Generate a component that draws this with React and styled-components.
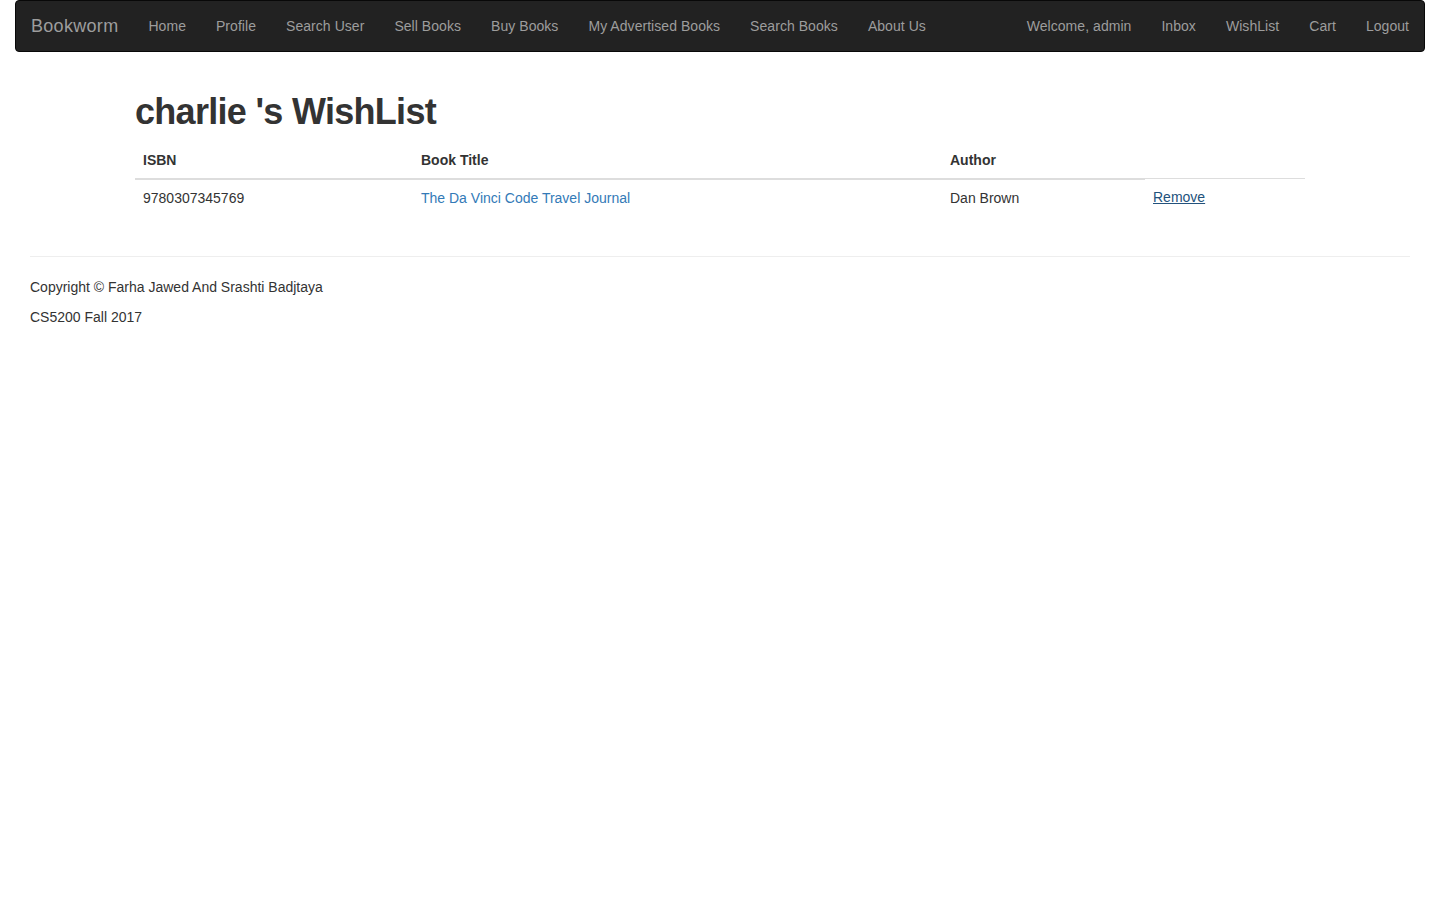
import React from "react";
import styled, { createGlobalStyle } from "styled-components";

const Global = createGlobalStyle`
  html, body { margin: 0; padding: 0; background: #fff; }
  body {
    font-family: "Liberation Sans", Arial, sans-serif;
    font-size: 14px;
    line-height: 20px;
    color: #333;
  }
  * { box-sizing: border-box; }
`;

const Page = styled.div`
  padding: 0 15px;
  display: flow-root;
`;

const Navbar = styled.nav`
  display: flex;
  align-items: center;
  height: 52px;
  background: #222;
  border: 1px solid #080808;
  border-radius: 4px;
  margin-bottom: 20px;
`;

const Brand = styled.a`
  padding: 15px;
  font-size: 18px;
  line-height: 20px;
  color: #9d9d9d;
  text-decoration: none;
  letter-spacing: 0.3px;
`;

const NavList = styled.ul`
  display: flex;
  list-style: none;
  margin: 0;
  padding: 0;
  margin-left: ${(p) => (p.$right ? "auto" : "0")};
`;

const NavLink = styled.a`
  display: block;
  padding: 15px;
  font-size: 14px;
  line-height: 20px;
  color: #9d9d9d;
  text-decoration: none;
  letter-spacing: 0.05px;
`;

const Container = styled.div`
  width: 1170px;
  margin: 0 auto;
  display: flow-root;
`;

const Title = styled.h1`
  font-size: 36px;
  line-height: 39.6px;
  font-weight: 700;
  margin: 20px 0 10px;
  color: #333;
  letter-spacing: -0.7px;
`;

const Table = styled.table`
  width: 100%;
  border-collapse: collapse;
  border-spacing: 0;
  margin-bottom: 20px;
`;

const Th = styled.th`
  text-align: left;
  padding: 8px;
  line-height: 20px;
  font-weight: 700;
  border-bottom: 2px solid #ddd;
  width: ${(p) => p.$w}px;
`;

const Td = styled.td`
  padding: 8px;
  line-height: 20px;
  border-top: 1px solid #ddd;
  vertical-align: top;
  width: ${(p) => p.$w}px;
`;

const TitleLink = styled.a`
  color: #337ab7;
  text-decoration: none;
`;

const RemoveLink = styled.a`
  color: #23527c;
  text-decoration: underline;
`;

const Footer = styled.footer`
  padding: 0 15px;
  display: flow-root;
`;

const Rule = styled.hr`
  margin: 20px 0;
  border: 0;
  border-top: 1px solid #eee;
`;

const FootText = styled.p`
  margin: 0 0 10px;
`;

const leftLinks = [
  "Home",
  "Profile",
  "Search User",
  "Sell Books",
  "Buy Books",
  "My Advertised Books",
  "Search Books",
  "About Us",
];
const rightLinks = ["Welcome, admin", "Inbox", "WishList", "Cart", "Logout"];

export default function App() {
  return (
    <>
      <Global />
      <Page>
        <Navbar>
          <Brand href="#">Bookworm</Brand>
          <NavList>
            {leftLinks.map((l) => (
              <li key={l}>
                <NavLink href="#">{l}</NavLink>
              </li>
            ))}
          </NavList>
          <NavList $right>
            {rightLinks.map((l) => (
              <li key={l}>
                <NavLink href="#">{l}</NavLink>
              </li>
            ))}
          </NavList>
        </Navbar>
        <Container>
          <Title>charlie 's WishList</Title>
          <Table>
            <thead>
              <tr>
                <Th $w={278}>ISBN</Th>
                <Th $w={529}>Book Title</Th>
                <Th $w={203}>Author</Th>
              </tr>
            </thead>
            <tbody>
              <tr>
                <Td $w={278}>9780307345769</Td>
                <Td $w={529}>
                  <TitleLink href="#">The Da Vinci Code Travel Journal</TitleLink>
                </Td>
                <Td $w={203}>Dan Brown</Td>
                <Td $w={160}>
                  <RemoveLink href="#">Remove</RemoveLink>
                </Td>
              </tr>
            </tbody>
          </Table>
        </Container>
        <Footer>
          <Rule />
          <FootText>Copyright © Farha Jawed And Srashti Badjtaya</FootText>
          <FootText>CS5200 Fall 2017</FootText>
        </Footer>
      </Page>
    </>
  );
}
